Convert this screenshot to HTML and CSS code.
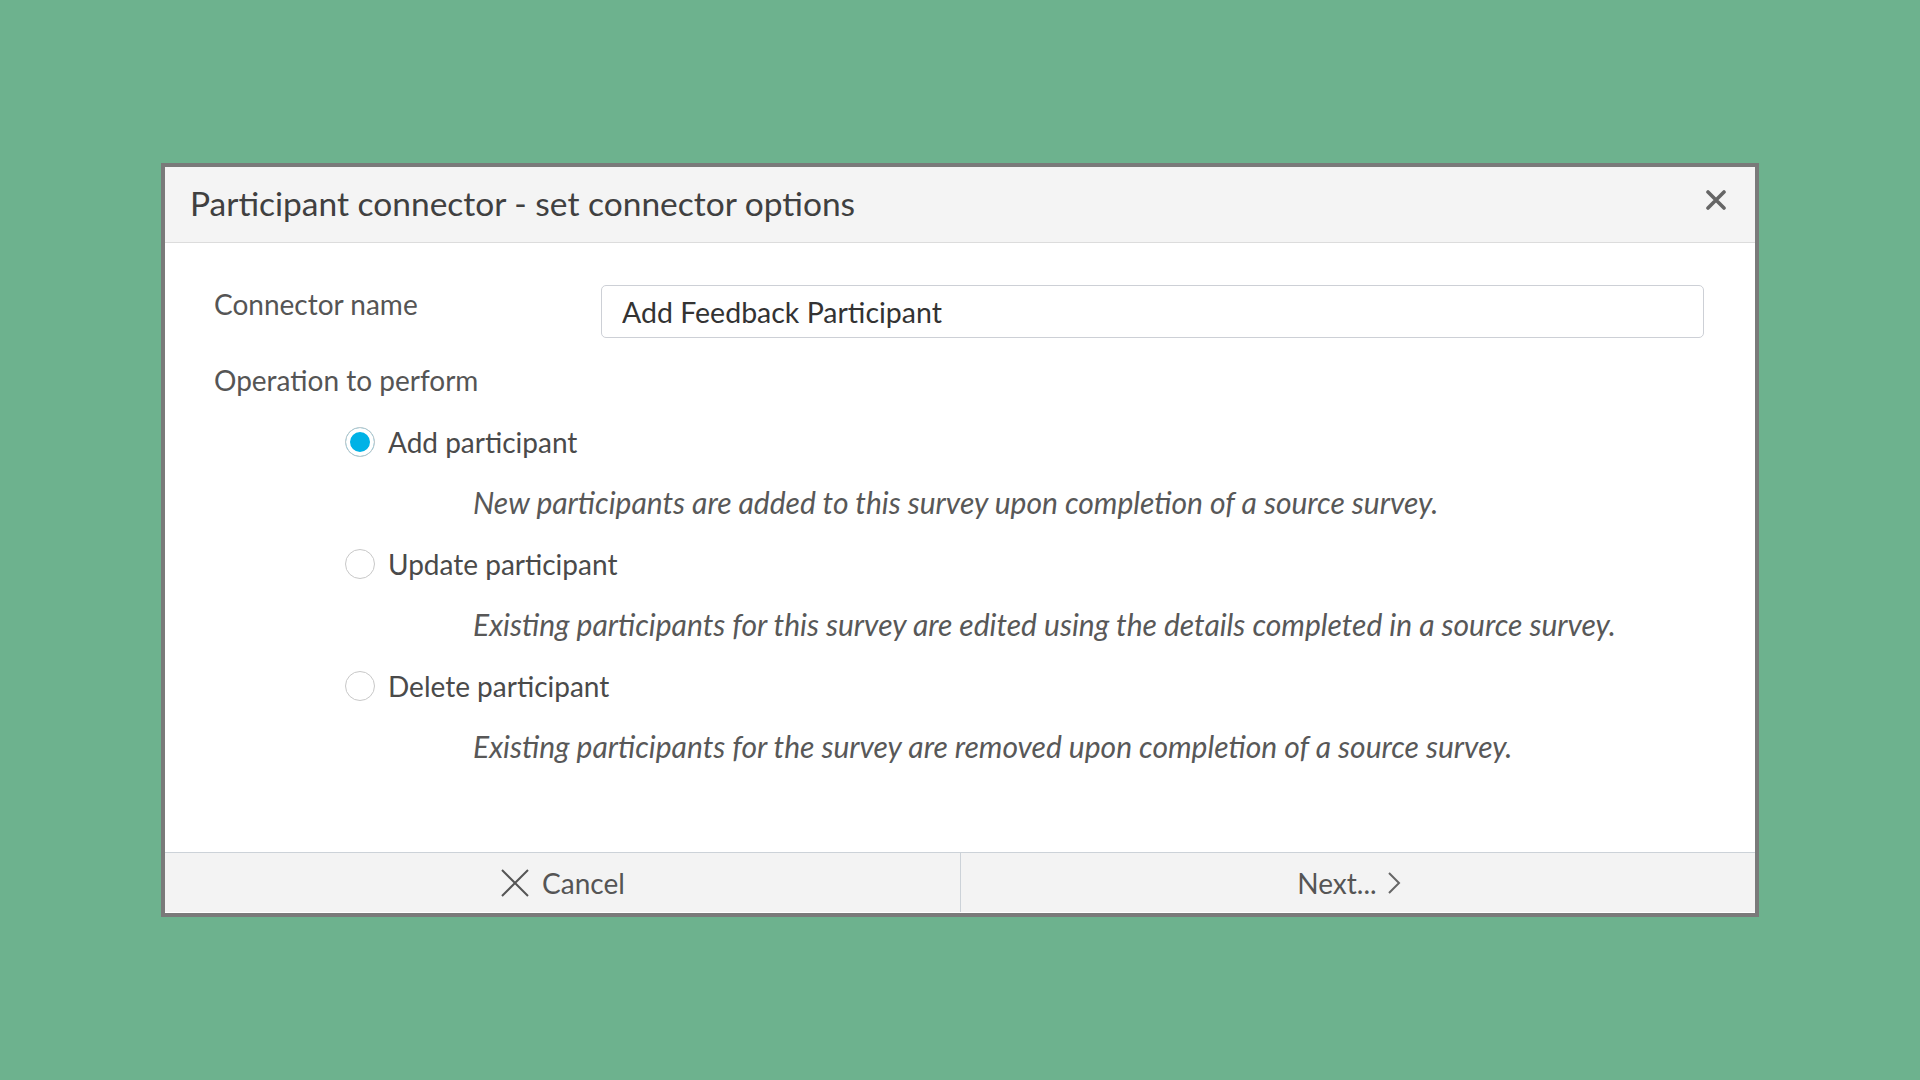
FILE: index.html
```html
<!DOCTYPE html>
<html lang="en">
<head>
    <meta charset="UTF-8">
    <title>Participant connector - set connector options</title>
    <link rel="stylesheet" href="styles.css">
</head>
<body>
<div class="modal">
    <div class="modal-header">
        <h2>Participant connector - set connector options</h2>
        <button class="close" type="button" aria-label="Close">
            <svg width="20" height="20" viewBox="0 0 20 20"><path d="M2 2L18 18M18 2L2 18" stroke="#666" stroke-width="3.6" stroke-linecap="round"/></svg>
        </button>
    </div>

    <div class="modal-body">
        <div class="field-row">
            <label for="connectorName">Connector name</label>
            <input type="text" id="connectorName" class="text-input" value="Add Feedback Participant">
        </div>

        <div class="section-label">Operation to perform</div>

        <!-- operations -->
        <div class="option">
            <span class="radio checked"></span>
            <span class="option-label">Add participant</span>
        </div>
        <div class="option-desc">New participants are added to this survey upon completion of a source survey.</div>

        <div class="option">
            <span class="radio"></span>
            <span class="option-label">Update participant</span>
        </div>
        <div class="option-desc">Existing participants for this survey are edited using the details completed in a source survey.</div>

        <div class="option">
            <span class="radio"></span>
            <span class="option-label">Delete participant</span>
        </div>
        <div class="option-desc">Existing participants for the survey are removed upon completion of a source survey.</div>
    </div>

    <div class="modal-footer">
        <button type="button" class="footer-btn">
            <svg width="30" height="30" viewBox="0 0 30 30"><path d="M2 2L28 28M28 2L2 28" stroke="#555" stroke-width="2" fill="none"/></svg>
            Cancel
        </button>
        <button type="button" class="footer-btn next">
            Next...
            <svg width="14" height="24" viewBox="0 0 14 24"><path d="M2 2L12 12L2 22" stroke="#666" stroke-width="2" fill="none"/></svg>
        </button>
    </div>
</div>
</body>
</html>
```

FILE: styles.css
```css
body { margin: 0; min-height: 100vh; display: flex; align-items: center; justify-content: center; background: #6db28e; font-family: Lato, "Open Sans", sans-serif; }
.modal { width: 1590px; border: 4px solid #7a7a7a; background: #fff; }
.modal-header { height: 76px; background: #f4f4f4; border-bottom: 1px solid #dcdcdc; display: flex; align-items: center; justify-content: space-between; padding: 0 29px 4px 25px; box-sizing: border-box; }
.modal-header h2 { margin: 0; font-size: 33.5px; font-weight: 400; color: #404040; }
.close { background: none; border: none; padding: 0; margin-top: -6px; cursor: pointer; display: flex; }
.modal-body { padding: 42px 51px 75px 49px; font-size: 28px; color: #555; }
.field-row { display: grid; grid-template-columns: 387px 1fr; height: 53px; }
.field-row label { line-height: 38px; }
.text-input { height: 53px; box-sizing: border-box; border: 1px solid #cdd0d6; border-radius: 5px; padding: 0 20px; font-family: inherit; font-size: 28.5px; color: #333; }
.section-label { margin-top: 12px; line-height: 61px; }
.option { display: flex; align-items: center; gap: 13px; height: 61px; padding-left: 131px; color: #4a4a4a; }
.radio { width: 30px; height: 30px; box-sizing: border-box; border: 1px solid #c8c8c8; border-radius: 50%; background: #fff; }
.radio.checked { background: #00b2e6; box-shadow: inset 0 0 0 4px #fff; }
.option-desc { line-height: 61px; padding-left: 259px; font-size: 30px; font-style: italic; color: #585858; }
.modal-footer { display: grid; grid-template-columns: 1fr 1fr; height: 59px; background: #f3f3f3; border-top: 1px solid #ccd2d8; border-bottom: 1px solid #fff; }
.footer-btn { background: none; border: none; font-family: inherit; font-size: 28px; color: #555; display: flex; align-items: center; justify-content: center; gap: 12px; cursor: pointer; }
.footer-btn.next { border-left: 1px solid #ccd2d8; gap: 10px; padding-right: 24px; }
```
